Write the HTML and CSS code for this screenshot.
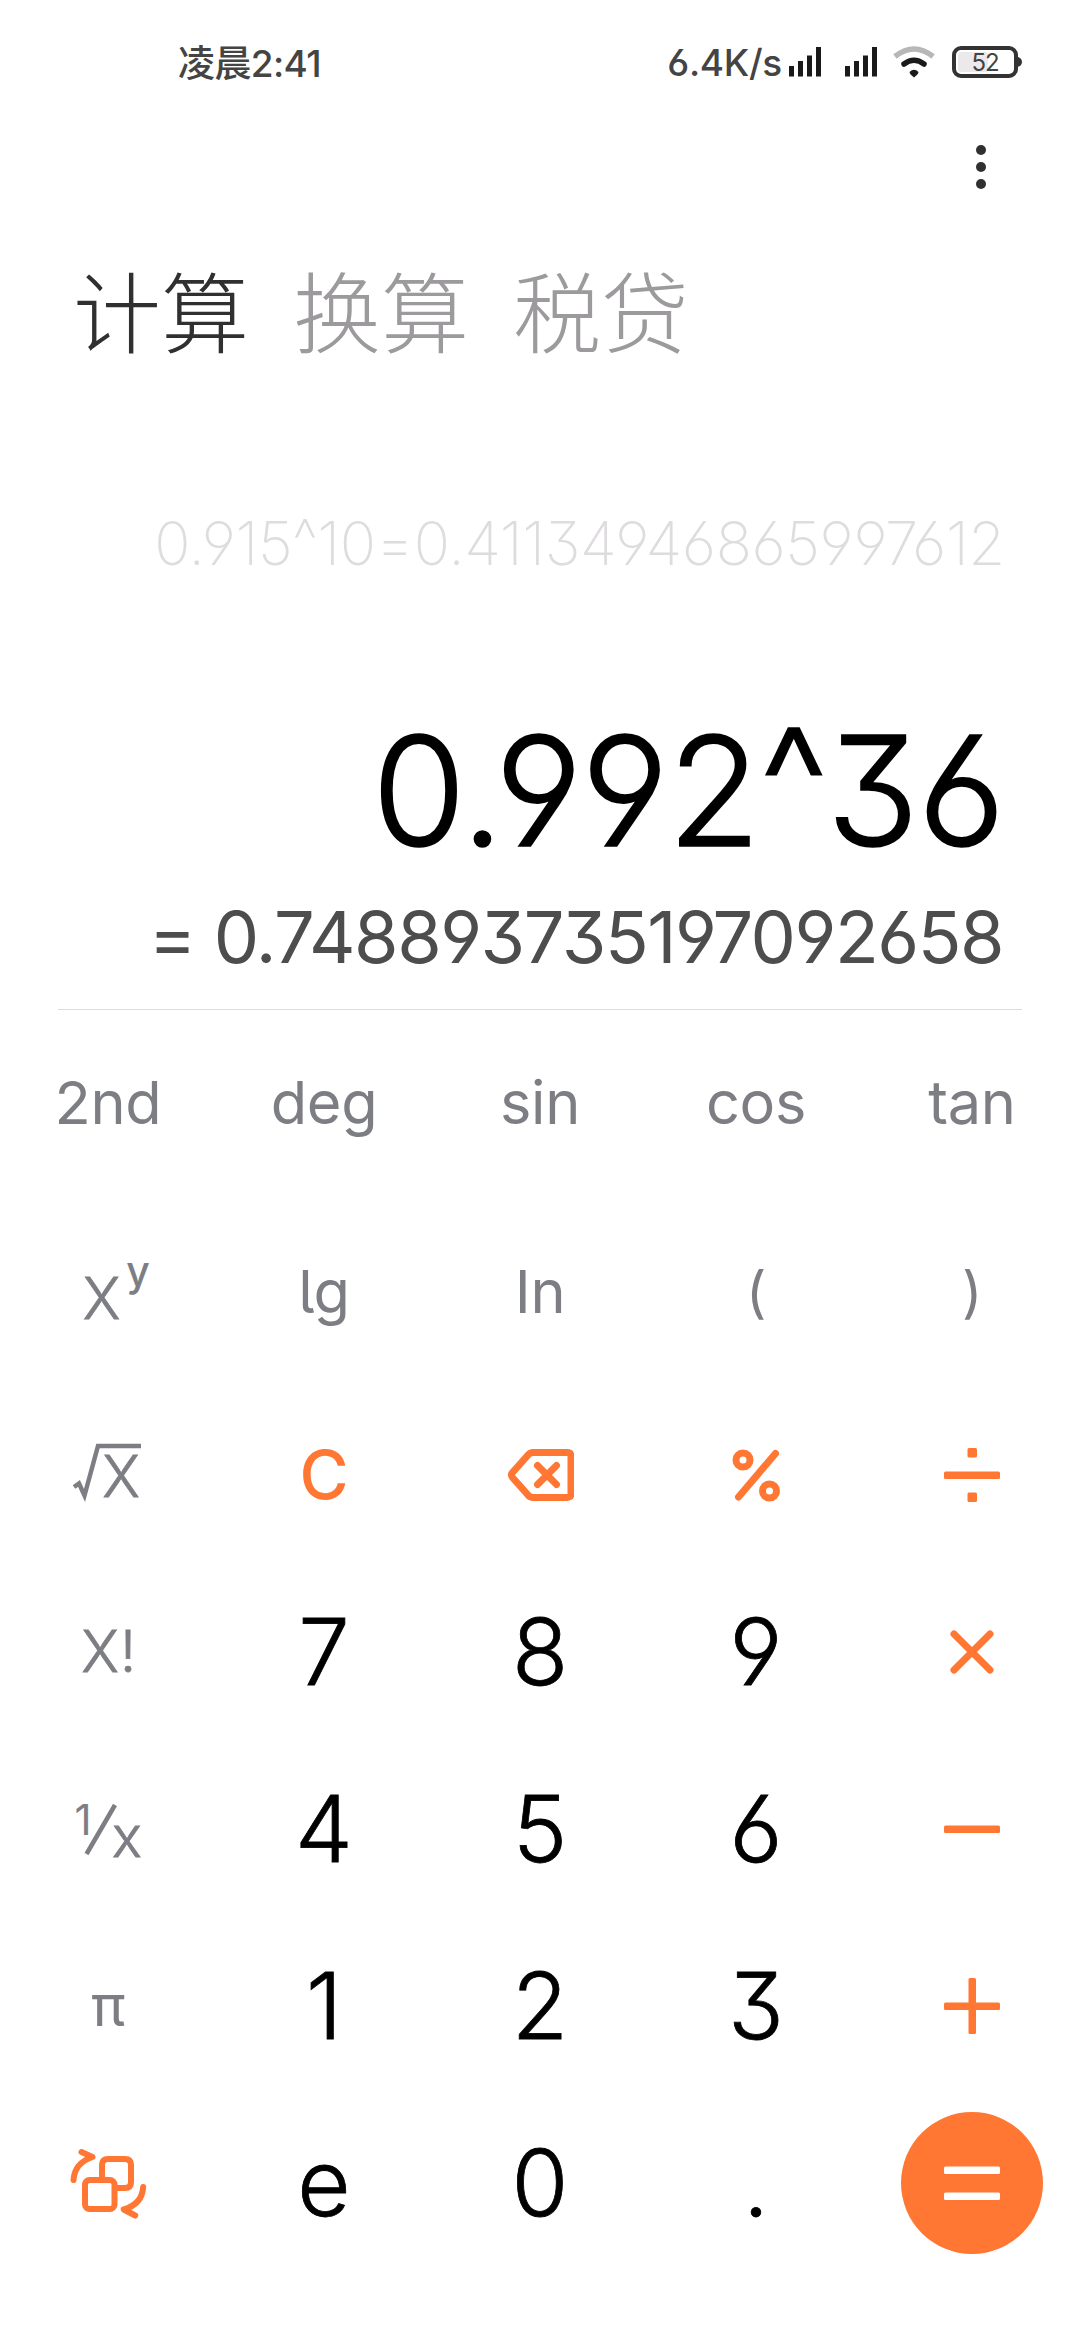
FILE: index.html
```
<!DOCTYPE html>
<html lang="zh-CN">
<head>
<meta charset="UTF-8">
<meta name="viewport" content="width=device-width, initial-scale=1.0">
<title>计算器</title>
<link rel="stylesheet" href="styles.css">
</head>
<body>

<header class="status-bar">
  <span class="status-time">凌晨2:41</span>
  <div class="status-right">
    <span class="status-speed">6.4K/s</span>
    <svg class="signal" width="33" height="32" viewBox="0 0 33 32">
      <path d="M2.5 20v10.500M11.5 15v15.500M20.5 9.500v21M29.500 1v29.500"/>
    </svg>
    <svg class="signal signal-2" width="33" height="32" viewBox="0 0 33 32">
      <path d="M2.5 20v10.500M11.5 15v15.500M20.5 9.500v21M29.500 1v29.500"/>
    </svg>
    <svg class="wifi" width="42" height="32" viewBox="0 0 42 32">
      <path class="wifi-weak" d="M2 10.500Q21 -4.500 40 10.500"/>
      <path class="wifi-on" d="M11 18Q21 10.500 31 18"/>
      <path d="M16.500 26Q21 21.500 25.500 26Q25.500 28 21 31.500Q16.500 28 16.500 26z"/>
    </svg>
    <div class="battery"><span class="battery-level"></span><span class="battery-text">52</span></div>
  </div>
</header>

<div class="toolbar">
  <svg width="12" height="46" viewBox="0 0 12 46">
    <circle cx="6" cy="6" r="5"/><circle cx="6" cy="23" r="5"/><circle cx="6" cy="40" r="5"/>
  </svg>
</div>

<nav class="tabs">
  <span class="tab active">计算</span>
  <span class="tab">换算</span>
  <span class="tab">税贷</span>
</nav>

<main class="display">
  <div class="history">0.915<span class="caret">^</span>10=0.41134946865997612</div>
  <div class="expression">0.992<span class="caret">^</span>36</div>
  <div class="result">= 0.748893735197092658</div>
</main>

<section class="keypad">
  <div class="key fn">2nd</div>
  <div class="key fn">deg</div>
  <div class="key fn">sin</div>
  <div class="key fn">cos</div>
  <div class="key fn">tan</div>

  <div class="key fn">
    <svg width="90" height="110" viewBox="63 1237 90 110">
      <text class="big-x" x="101.500" y="1318.500">X</text>
      <text class="sup-y" x="138" y="1286">y</text>
    </svg>
  </div>
  <div class="key fn">lg</div>
  <div class="key fn">In</div>
  <div class="key fn paren">(</div>
  <div class="key fn paren">)</div>

  <div class="key fn">
    <svg width="90" height="80" viewBox="63 1436 90 80">
      <path class="thin" d="M74 1488l5-3.500 5.500 12 13.500-49.500h43"/>
      <text class="big-x" x="121" y="1498">X</text>
    </svg>
  </div>
  <div class="key op clear">C</div>
  <div class="key op">
    <svg width="68" height="56" viewBox="0 0 68 56">
      <path class="line" d="M27 5.500h34q4 0 4 4v37q0 4-4 4H27q-3 0-5-2.500L6.500 30.500q-2-2.500 0-5L22 8q2-2.500 5-2.500z"/>
      <path class="line" d="M31.500 18.500l19 19M50.500 18.500l-19 19"/>
    </svg>
  </div>
  <div class="key op">
    <svg width="56" height="56" viewBox="0 0 56 56">
      <path class="line" d="M47.500 6.500L10.500 50"/>
      <ellipse class="line" cx="15" cy="13" rx="7" ry="7"/>
      <ellipse class="line" cx="41.500" cy="44" rx="7" ry="7"/>
    </svg>
  </div>
  <div class="key op">
    <svg width="56" height="56" viewBox="0 0 56 56">
      <rect x="23.500" y="1" width="9.500" height="9.500" rx="1.500"/>
      <rect x="0" y="24.500" width="56" height="7.500" rx="1.500"/>
      <rect x="23.500" y="45.500" width="9.500" height="9.500" rx="1.500"/>
    </svg>
  </div>

  <div class="key fn">
    <svg width="90" height="80" viewBox="63 1613 90 80">
      <text class="big-x" x="100" y="1672.500">X</text>
      <text class="big-x" x="128" y="1672.500">!</text>
    </svg>
  </div>
  <div class="key num">7</div>
  <div class="key num">8</div>
  <div class="key num">9</div>
  <div class="key op">
    <svg width="56" height="56" viewBox="0 0 56 56">
      <path class="line" d="M10 10l36 36M46 10L10 46"/>
    </svg>
  </div>

  <div class="key fn">
    <svg width="90" height="90" viewBox="63 1785 90 90">
      <text class="small" x="83" y="1836">1</text>
      <path class="thin" d="M86.500 1855L115 1806"/>
      <text class="small-x" x="127" y="1858">x</text>
    </svg>
  </div>
  <div class="key num">4</div>
  <div class="key num">5</div>
  <div class="key num">6</div>
  <div class="key op">
    <svg width="56" height="56" viewBox="0 0 56 56">
      <rect x="0" y="24.500" width="56" height="7.500" rx="1.500"/>
    </svg>
  </div>

  <div class="key fn pi">π</div>
  <div class="key num">1</div>
  <div class="key num">2</div>
  <div class="key num">3</div>
  <div class="key op">
    <svg width="56" height="56" viewBox="0 0 56 56">
      <rect x="0" y="24.500" width="56" height="7.500" rx="1.500"/>
      <rect x="24.500" y="0" width="7.500" height="56" rx="1.500"/>
    </svg>
  </div>

  <div class="key op">
    <svg width="80" height="76" viewBox="68 2145 80 76">
      <g class="swap">
        <path d="M102 2179v-14q0-6 6-6h17q6 0 6 6v17q0 6-6 6h-9"/>
        <rect x="85" y="2180" width="29.500" height="29" rx="4.500"/>
        <path d="M73.500 2180q1-17 19-23l-11-5"/>
        <path d="M143.200 2187q-1 17-19.500 22.500l11.500 6"/>
      </g>
    </svg>
  </div>
  <div class="key num">e</div>
  <div class="key num">0</div>
  <div class="key num">.</div>
  <div class="key">
    <div class="equals">
      <svg width="56" height="56" viewBox="0 0 56 56">
        <rect x="0" y="11.500" width="56" height="7.500" rx="1.500"/>
        <rect x="0" y="37.500" width="56" height="7.500" rx="1.500"/>
      </svg>
    </div>
  </div>
</section>

</body>
</html>
```
FILE: styles.css
```
* {
  box-sizing: border-box;
}

body {
  margin: 0;
  width: 1080px;
  height: 2340px;
  background-color: #fff;
  font-family: Inter, "Noto Sans CJK SC", sans-serif;
  /* flat 3, open 6 and 9, tailed l */
  font-feature-settings: "cv03", "cv04", "cv09", "cv05";
  overflow: hidden;
}

svg {
  display: block;
  flex: none;
}

/* 状态栏 */
.status-bar {
  display: flex;
  align-items: center;
  justify-content: space-between;
  height: 124px;
  padding: 0 58px 0 178px;
  color: #444;
  font-size: 37px;
  font-weight: 500;
}

.status-time {
  padding-bottom: 3px;
  letter-spacing: -0.6px;
}

.status-right {
  display: flex;
  align-items: center;
}

.status-speed {
  margin-right: 7px;
  letter-spacing: -0.3px;
}

.signal {
  fill: none;
  stroke: #1a1a1a;
  stroke-width: 5;
}

.signal-2 {
  margin-left: 23px;
}

.wifi {
  margin-left: 15px;
  fill: #1a1a1a;
}

.wifi path.wifi-weak,
.wifi path.wifi-on {
  fill: none;
  stroke: #1a1a1a;
  stroke-width: 5.5;
  stroke-linecap: round;
}

.wifi path.wifi-weak {
  stroke: #b8b6b9;
  stroke-linecap: butt;
}

.battery {
  position: relative;
  display: flex;
  align-items: center;
  justify-content: center;
  width: 66px;
  height: 32px;
  margin: 0 4px 0 17px;
  border: 4px solid #333;
  border-radius: 9px;
}

.battery::after {
  content: "";
  position: absolute;
  right: -8px;
  top: 7px;
  width: 5px;
  height: 10px;
  border-radius: 0 5px 5px 0;
  background-color: #333;
}

.battery-level {
  position: absolute;
  left: 2px;
  top: 2px;
  width: 30px;
  height: 20px;
  border-radius: 3px;
  background-color: #ece9ed;
}

.battery-text {
  position: relative;
  font-size: 24px;
  font-weight: 400;
  letter-spacing: -1px;
}

.toolbar {
  display: flex;
  justify-content: flex-end;
  height: 126px;
  padding: 20px 93px 0 0;
  fill: #303030;
}

/* 标签 */
.tabs {
  display: flex;
  gap: 44px;
  height: 124px;
  padding-left: 73px;
  font-family: "Noto Sans CJK SC", sans-serif;
  font-size: 88px;
  font-weight: 300;
  line-height: 115px;
}

.tab {
  color: #9c9a9c;
}

.tab.active {
  color: #303030;
}

/* 显示区 */
.display {
  display: flex;
  flex-direction: column;
  align-items: flex-end;
  height: 636px;
  margin: 0 58px;
  padding-right: 20px;
  border-bottom: 1px solid #dcdcdc;
  white-space: nowrap;
}

.history {
  margin-top: 119px;
  margin-right: -3px;
  height: 100px;
  line-height: 100px;
  color: #dedcde;
  font-size: 60px;
  font-weight: 200;
  letter-spacing: -0.4px;
}

.expression {
  margin-top: 108px;
  margin-right: -2px;
  height: 180px;
  line-height: 180px;
  color: #000;
  font-size: 152px;
  font-weight: 300;
  letter-spacing: -1.2px;
  -webkit-text-stroke: 1.6px #000;
}

.result {
  margin-top: 6px;
  margin-right: -1px;
  height: 100px;
  line-height: 100px;
  color: #4d4d4d;
  font-size: 72px;
  font-weight: 400;
  letter-spacing: -1.5px;
}

.caret {
  line-height: 0;
  vertical-align: 0.07em;
}

/* 键盘 */
.keypad {
  display: grid;
  grid-template-columns: repeat(5, 216px);
  grid-template-rows: 189px 189px repeat(5, 177px);
  margin-top: -2px;
}

.key {
  display: flex;
  align-items: center;
  justify-content: center;
  line-height: 1;
}

.fn {
  color: #7d7e84;
  font-size: 59.5px;
  letter-spacing: -0.3px;
}

.paren {
  font-size: 56px;
}

.pi {
  font-size: 57px;
}

.num {
  color: #000;
  font-size: 92px;
  font-weight: 300;
  -webkit-text-stroke: 0.8px #000;
}

.clear {
  font-size: 67px;
  font-weight: 500;
}

.op {
  color: #ff7733;
  fill: #ff7733;
}

.op .line {
  fill: none;
  stroke: #ff7733;
  stroke-width: 7;
  stroke-linecap: round;
}

.thin {
  fill: none;
  stroke: #7d7e84;
  stroke-width: 4.5;
}

.fn text {
  fill: #7d7e84;
  text-anchor: middle;
  letter-spacing: 0;
}

.big-x,
.small-x {
  font-size: 57px;
  font-weight: 300;
  stroke: #7d7e84;
  stroke-width: 0.8;
}

.sup-y {
  font-size: 41px;
  font-weight: 500;
}

.small {
  font-size: 42px;
  font-weight: 400;
}

.swap {
  fill: none;
  stroke: #ff7733;
  stroke-width: 6;
  stroke-linecap: round;
  stroke-linejoin: round;
}

.equals {
  display: flex;
  align-items: center;
  justify-content: center;
  width: 142px;
  height: 142px;
  border-radius: 50%;
  background-color: #ff7733;
  fill: #fff;
}
```
